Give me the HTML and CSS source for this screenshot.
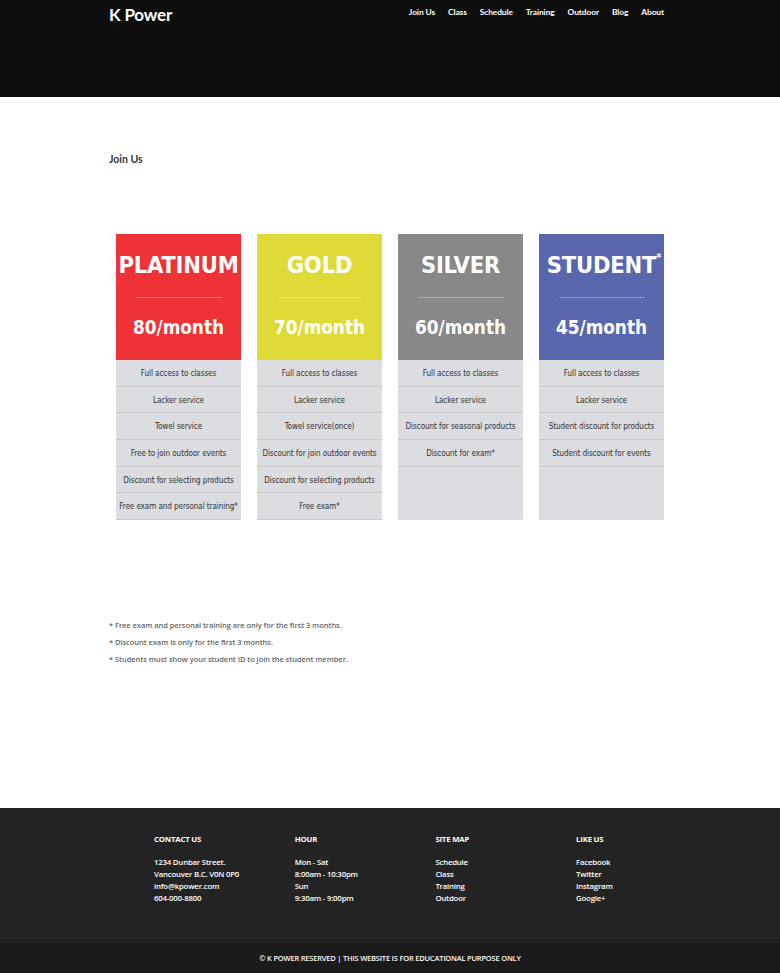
FILE: index.html
```html
<!DOCTYPE html>
<html>
<head>
<meta charset="utf-8">
<title>K Power - Join Us</title>
<link rel="stylesheet" href="styles.css">
</head>
<body>
<header class="site-header">
  <div class="container topbar">
    <div class="logo">K Power</div>
    <nav class="nav">
      <a href="#">Join Us</a>
      <a href="#">Class</a>
      <a href="#">Schedule</a>
      <a href="#">Training</a>
      <a href="#">Outdoor</a>
      <a href="#">Blog</a>
      <a href="#">About</a>
    </nav>
  </div>
</header>

<main class="main">
  <div class="container">
    <h1 class="page-title">Join Us</h1>
    <div class="plans">
      <div class="plan">
        <div class="plan-head red">
          <div class="plan-name">PLATINUM</div>
          <div class="plan-rule"></div>
          <div class="plan-price">80/month</div>
        </div>
        <ul class="plan-list">
          <li>Full access to classes</li>
          <li>Lacker service</li>
          <li>Towel service</li>
          <li>Free to join outdoor events</li>
          <li>Discount for selecting products</li>
          <li>Free exam and personal training*</li>
        </ul>
      </div>
      <div class="plan">
        <div class="plan-head yellow">
          <div class="plan-name">GOLD</div>
          <div class="plan-rule"></div>
          <div class="plan-price">70/month</div>
        </div>
        <ul class="plan-list">
          <li>Full access to classes</li>
          <li>Lacker service</li>
          <li>Towel service(once)</li>
          <li>Discount for join outdoor events</li>
          <li>Discount for selecting products</li>
          <li>Free exam*</li>
        </ul>
      </div>
      <div class="plan">
        <div class="plan-head grey">
          <div class="plan-name">SILVER</div>
          <div class="plan-rule"></div>
          <div class="plan-price">60/month</div>
        </div>
        <ul class="plan-list">
          <li>Full access to classes</li>
          <li>Lacker service</li>
          <li>Discount for seasonal products</li>
          <li>Discount for exam*</li>
        </ul>
      </div>
      <div class="plan">
        <div class="plan-head blue">
          <div class="plan-name">STUDENT<sup class="star">*</sup></div>
          <div class="plan-rule"></div>
          <div class="plan-price">45/month</div>
        </div>
        <ul class="plan-list">
          <li>Full access to classes</li>
          <li>Lacker service</li>
          <li>Student discount for products</li>
          <li>Student discount for events</li>
        </ul>
      </div>
    </div>

    <div class="notes">
      <p>* Free exam and personal training are only for the first 3 months.</p>
      <p>* Discount exam is only for the first 3 months.</p>
      <p>* Students must show your student ID to join the student member.</p>
    </div>
  </div>
</main>

<footer class="footer">
  <div class="footer-cols">
    <div class="fcol">
      <h3>CONTACT US</h3>
      <p>1234 Dunbar Street.</p>
      <p>Vancouver B.C. V0N 0P0</p>
      <p>info@kpower.com</p>
      <p>604-000-8800</p>
    </div>
    <div class="fcol">
      <h3>HOUR</h3>
      <p>Mon - Sat</p>
      <p>8:00am - 10:30pm</p>
      <p>Sun</p>
      <p>9:30am - 9:00pm</p>
    </div>
    <div class="fcol">
      <h3>SITE MAP</h3>
      <p>Schedule</p>
      <p>Class</p>
      <p>Training</p>
      <p>Outdoor</p>
    </div>
    <div class="fcol">
      <h3>LIKE US</h3>
      <p>Facebook</p>
      <p>Twitter</p>
      <p>Instagram</p>
      <p>Google+</p>
    </div>
  </div>
  <div class="copyright">© K POWER RESERVED | THIS WEBSITE IS FOR EDUCATIONAL PURPOSE ONLY</div>
</footer>
</body>
</html>
```

FILE: styles.css
```css
* { box-sizing: border-box; }
html, body { margin: 0; padding: 0; }
body {
  font-family: "Lato", "Open Sans", sans-serif;
  background: #ffffff;
  color: #333;
}
.container {
  width: 562px;
  margin: 0 auto;
}
.site-header {
  background: #0d0d0d;
  height: 97px;
}
.topbar {
  display: flex;
  justify-content: space-between;
  align-items: flex-start;
  padding-right: 7px;
}
.logo {
  color: #fff;
  font-weight: 700;
  font-size: 17px;
  line-height: 20px;
  padding-top: 5px;
  letter-spacing: -0.2px;
}
.nav {
  display: flex;
  gap: 13px;
  padding-top: 6px;
}
.nav a {
  color: #fff;
  text-decoration: none;
  font-size: 8.4px;
  line-height: 12px;
  font-weight: 700;
  letter-spacing: -0.1px;
}
.main {
  height: 711px;
  padding-top: 55px;
}
.page-title {
  margin: 0;
  font-size: 10.5px;
  line-height: 14px;
  font-weight: 700;
  color: #333;
}
.plans {
  display: flex;
  gap: 16px;
  padding-left: 7px;
  margin-top: 68px;
}
.plan {
  width: 125px;
  display: flex;
  flex-direction: column;
  background: #dcdde0;
  height: 286px;
}
.plan-head {
  flex-shrink: 0;
  height: 126px;
  color: #fff;
  text-align: center;
  font-family: "DejaVu Sans Condensed", "DejaVu Sans", sans-serif;
  font-weight: 700;
  padding-top: 17px;
}
.red { background: #ef3236; }
.yellow { background: #e0da38; }
.grey { background: #888888; }
.blue { background: #5968ac; }
.plan-name {
  font-size: 23.5px;
  line-height: 28px;
  letter-spacing: -0.2px;
  position: relative;
}
.star {
  font-size: 11px;
  position: absolute;
  top: -7px;
  margin-left: 0;
}
.plan-rule {
  width: 86px;
  height: 1px;
  margin: 18px auto 0;
  background: rgba(255, 255, 255, 0.35);
}
.plan-price {
  font-size: 18.8px;
  line-height: 24px;
  margin-top: 18px;
}
.plan-list {
  list-style: none;
  margin: 0;
  padding: 0;
}
.plan-list li {
  height: 26.67px;
  line-height: 26px;
  border-bottom: 1px solid #c7c8ca;
  text-align: center;
  font-family: "DejaVu Sans Condensed", "DejaVu Sans", sans-serif;
  font-size: 8.1px;
  color: #333;
  white-space: nowrap;
  letter-spacing: -0.1px;
}
.notes {
  margin-top: 97px;
}
.notes p {
  margin: 0;
  font-family: "Open Sans", sans-serif;
  font-weight: 600;
  font-size: 7.5px;
  line-height: 17px;
  color: #666;
  letter-spacing: -0.05px;
}
.footer {
  background: #232323;
  color: #fff;
}
.footer-cols {
  height: 135px;
  display: flex;
  padding-left: 154px;
  padding-top: 25px;
}
.fcol {
  width: 140.7px;
}
.fcol h3 {
  margin: 0 0 11px;
  font-family: "Open Sans", sans-serif;
  font-size: 7.8px;
  font-weight: 700;
  line-height: 12px;
  letter-spacing: -0.2px;
}
.fcol p {
  margin: 0;
  font-family: "Open Sans", sans-serif;
  font-size: 7.8px;
  font-weight: 600;
  line-height: 12px;
  letter-spacing: -0.2px;
}
.copyright {
  background: #1a1a1a;
  height: 30px;
  line-height: 31px;
  text-align: center;
  font-family: "Open Sans", sans-serif;
  font-size: 7.5px;
  font-weight: 600;
  letter-spacing: -0.2px;
  color: #fff;
}
```
